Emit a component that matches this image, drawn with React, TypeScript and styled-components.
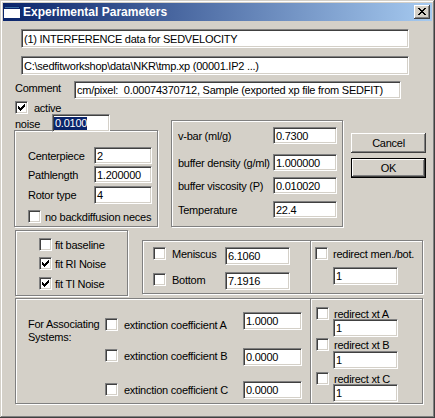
import React from 'react';
import styled, { createGlobalStyle } from 'styled-components';

const Global = createGlobalStyle`
  html, body { margin: 0; padding: 0; background: #D4D0C8; }
  body { font-family: "Liberation Sans", Arial, sans-serif; font-size: 11px; letter-spacing: -0.25px; color: #000; }
  * { box-sizing: border-box; }
`;

const Window = styled.div`
  width: 435px;
  height: 418px;
  padding: 3px;
  background: #D4D0C8;
  box-shadow: inset -1px -1px 0 #404040, inset 1px 1px 0 #D4D0C8, inset -2px -2px 0 #808080, inset 2px 2px 0 #fff;
  display: flex;
  flex-direction: column;
  overflow: hidden;
`;

const TitleBar = styled.div`
  height: 18px;
  display: flex;
  align-items: center;
  padding: 0 2px 0 1px;
  background: linear-gradient(to right, #0A246A, #A6CAF0);
  color: #fff;
  font-weight: bold;
  font-size: 12px;
  letter-spacing: 0;
`;

const TitleText = styled.span`
  margin-left: 3px;
  flex: 1;
  white-space: nowrap;
`;

const CloseBtn = styled.div`
  width: 16px;
  height: 14px;
  background: #D4D0C8;
  box-shadow: inset -1px -1px 0 #404040, inset 1px 1px 0 #fff, inset -2px -2px 0 #808080;
  display: flex;
  align-items: center;
  justify-content: center;
  padding-bottom: 1px;
`;

const Client = styled.div`
  display: flex;
  flex-direction: column;
  flex: 1;
`;

const Line = styled.div<{ $mt?: number; $ml?: number }>`
  display: flex;
  align-items: flex-start;
  margin-top: ${p => p.$mt ?? 0}px;
  margin-left: ${p => p.$ml ?? 0}px;
`;

const Edit = styled.div<{ $w: number; $h?: number; $mt?: number; $ml?: number }>`
  width: ${p => p.$w}px;
  height: ${p => p.$h ?? 18}px;
  margin-top: ${p => p.$mt ?? 0}px;
  margin-left: ${p => p.$ml ?? 0}px;
  flex-shrink: 0;
  background: #fff;
  border: 1px solid;
  border-color: #808080 #fff #fff #808080;
  box-shadow: inset 1px 1px 0 #404040, inset -1px -1px 0 #D4D0C8;
  padding: 0 2px;
  display: flex;
  align-items: center;
  white-space: nowrap;
  overflow: hidden;
  position: relative;
  z-index: 1;
`;

const Selected = styled.span`
  background: #0A246A;
  color: #fff;
  margin-left: -1px;
  padding-left: 1px;
  line-height: 13px;
`;

const Label = styled.span<{ $w?: number }>`
  width: ${p => (p.$w ? `${p.$w}px` : 'auto')};
  flex-shrink: 0;
  white-space: nowrap;
`;

const CommentLabel = styled(Label)`
  margin-top: 1px;
`;

const NoiseLabel = styled(Label)`
  margin-top: 4px;
`;

const Box = styled.span`
  width: 13px;
  height: 13px;
  flex-shrink: 0;
  background: #fff;
  border: 1px solid;
  border-color: #808080 #fff #fff #808080;
  box-shadow: inset 1px 1px 0 #404040, inset -1px -1px 0 #D4D0C8;
  display: flex;
  align-items: center;
  justify-content: center;
`;

const CheckRow = styled.div<{ $gap?: number; $w?: number; $mt?: number }>`
  display: flex;
  align-items: center;
  height: 13px;
  gap: ${p => p.$gap ?? 5}px;
  width: ${p => (p.$w ? `${p.$w}px` : 'auto')};
  margin-top: ${p => p.$mt ?? 0}px;
  flex-shrink: 0;
  white-space: nowrap;
`;

const Group = styled.div<{ $w: number; $h: number; $mt?: number; $ml?: number }>`
  width: ${p => p.$w}px;
  height: ${p => p.$h}px;
  margin-top: ${p => p.$mt ?? 0}px;
  margin-left: ${p => p.$ml ?? 0}px;
  flex-shrink: 0;
  border: 1px solid #808080;
  box-shadow: inset 1px 1px 0 #fff, 1px 1px 0 #fff;
  display: flex;
  flex-direction: column;
`;

const LeftCol = styled.div`
  width: 144px;
  display: flex;
  flex-direction: column;
  flex-shrink: 0;
`;

const NoiseRow = styled.div`
  height: 18px;
  padding-left: 1px;
  display: flex;
  align-items: flex-start;
`;

const CellGroup = styled(Group)`
  margin-top: -2px;
  padding: 16px 0 0 13px;
`;

const ParamRow = styled.div<{ $cols: string; $mt?: number }>`
  display: grid;
  grid-template-columns: ${p => p.$cols};
  align-items: center;
  height: 17px;
  margin-top: ${p => p.$mt ?? 0}px;
  white-space: nowrap;
`;

const VbarGroup = styled(Group)`
  padding: 6px 0 0 6px;
`;

const ButtonCol = styled.div`
  display: flex;
  flex-direction: column;
  gap: 5px;
  margin: 19px 0 0 8px;
`;

const Button = styled.div<{ $default?: boolean }>`
  width: 75px;
  height: 20px;
  display: flex;
  align-items: center;
  justify-content: center;
  background: #D4D0C8;
  box-shadow: inset -1px -1px 0 #404040, inset 1px 1px 0 #fff, inset -2px -2px 0 #808080;
  border: ${p => (p.$default ? '1px solid #000' : 'none')};
`;

const FitGroup = styled(Group)`
  padding: 7px 0 0 23px;
  gap: 6px;
`;

const MenGroup = styled(Group)`
  padding: 6px 0 0 10px;
  gap: 7px;
`;

const FieldRow = styled.div`
  display: flex;
  align-items: flex-start;
`;

const RedirGroup = styled(Group)`
  padding: 6px 0 0 4px;
`;

const ExtGroup = styled(Group)`
  padding: 13px 0 0 12px;
  flex-direction: row;
`;

const AssocLabel = styled.div`
  width: 77px;
  margin-top: 6px;
  line-height: 13px;
  flex-shrink: 0;
`;

const ExtRows = styled.div`
  display: flex;
  flex-direction: column;
`;

const ExtRow = styled.div<{ $mt?: number }>`
  display: flex;
  align-items: flex-start;
  margin-top: ${p => p.$mt ?? 0}px;
`;

const XtGroup = styled(Group)`
  padding: 8px 0 0 5px;
`;

const Check = () => (
  <svg width="7" height="7" viewBox="0 0 7 7" shapeRendering="crispEdges">
    <rect x="0" y="2" width="1" height="3" fill="#000" />
    <rect x="1" y="3" width="1" height="3" fill="#000" />
    <rect x="2" y="4" width="1" height="3" fill="#000" />
    <rect x="3" y="3" width="1" height="3" fill="#000" />
    <rect x="4" y="2" width="1" height="3" fill="#000" />
    <rect x="5" y="1" width="1" height="3" fill="#000" />
    <rect x="6" y="0" width="1" height="3" fill="#000" />
  </svg>
);

const CheckBox = ({ checked }: { checked?: boolean }) => <Box>{checked ? <Check /> : null}</Box>;

const AppIcon = () => (
  <svg width="16" height="12" viewBox="0 0 16 12" shapeRendering="crispEdges">
    <rect x="0" y="0" width="16" height="12" fill="#fff" />
    <rect x="0" y="0" width="16" height="3" fill="#0A246A" />
    <rect x="1" y="1" width="14" height="1" fill="#3A6EA5" />
  </svg>
);

const CloseGlyph = () => (
  <svg width="8" height="7" viewBox="0 0 8 7" shapeRendering="crispEdges">
    <path d="M0 0h2v1h-2zM6 0h2v1h-2zM1 1h2v1h-2zM5 1h2v1h-2zM2 2h4v1h-4zM3 3h2v1h-2zM2 4h4v1h-4zM1 5h2v1h-2zM5 5h2v1h-2zM0 6h2v1h-2zM6 6h2v1h-2z" fill="#000" />
  </svg>
);

export default function App() {
  return (
    <>
      <Global />
      <Window>
        <TitleBar>
          <AppIcon />
          <TitleText>Experimental Parameters</TitleText>
          <CloseBtn>
            <CloseGlyph />
          </CloseBtn>
        </TitleBar>
        <Client>
          <Line $mt={8} $ml={18}>
            <Edit $w={388} $h={19}>(1) INTERFERENCE data for SEDVELOCITY</Edit>
          </Line>
          <Line $mt={8} $ml={18}>
            <Edit $w={388} $h={19}>C:\sedfitworkshop\data\NKR\tmp.xp (00001.IP2 ...)</Edit>
          </Line>
          <Line $mt={6} $ml={12}>
            <CommentLabel $w={59}>Comment</CommentLabel>
            <Edit $w={327} $h={18}>cm/pixel:&nbsp; 0.00074370712, Sample (exported xp file from SEDFIT)</Edit>
          </Line>
          <Line $mt={2} $ml={12}>
            <CheckRow $gap={6}>
              <CheckBox checked />
              <span>active</span>
            </CheckRow>
          </Line>
          <Line $ml={11}>
            <LeftCol>
              <NoiseRow>
                <NoiseLabel $w={37}>noise</NoiseLabel>
                <Edit $w={58} $h={18}>
                  <Selected>0.0100</Selected>
                </Edit>
              </NoiseRow>
              <CellGroup $w={144} $h={97}>
                <ParamRow $cols="66px 58px">
                  <span>Centerpiece</span>
                  <Edit $w={58} $h={17}>2</Edit>
                </ParamRow>
                <ParamRow $cols="66px 58px" $mt={2}>
                  <span>Pathlength</span>
                  <Edit $w={58} $h={17}>1.200000</Edit>
                </ParamRow>
                <ParamRow $cols="66px 58px" $mt={3}>
                  <span>Rotor type</span>
                  <Edit $w={58} $h={18}>4</Edit>
                </ParamRow>
                <CheckRow $gap={4} $mt={7}>
                  <CheckBox />
                  <span>no backdiffusion neces</span>
                </CheckRow>
              </CellGroup>
            </LeftCol>
            <VbarGroup $w={172} $h={107} $mt={6} $ml={13}>
              <ParamRow $cols="95px 64px">
                <span>v-bar (ml/g)</span>
                <Edit $w={64} $h={17}>0.7300</Edit>
              </ParamRow>
              <ParamRow $cols="95px 64px" $mt={10}>
                <span>buffer density (g/ml)</span>
                <Edit $w={64} $h={17}>1.000000</Edit>
              </ParamRow>
              <ParamRow $cols="95px 64px" $mt={6}>
                <span>buffer viscosity (P)</span>
                <Edit $w={64} $h={17}>0.010020</Edit>
              </ParamRow>
              <ParamRow $cols="95px 64px" $mt={7}>
                <span>Temperature</span>
                <Edit $w={64} $h={17}>22.4</Edit>
              </ParamRow>
            </VbarGroup>
            <ButtonCol>
              <Button>Cancel</Button>
              <Button $default>OK</Button>
            </ButtonCol>
          </Line>
          <Line $ml={12}>
            <FitGroup $w={113} $h={66} $mt={3}>
              <CheckRow $gap={3}>
                <CheckBox />
                <span>fit baseline</span>
              </CheckRow>
              <CheckRow $gap={3}>
                <CheckBox checked />
                <span>fit RI Noise</span>
              </CheckRow>
              <CheckRow $gap={3} $mt={1}>
                <CheckBox checked />
                <span>fit TI Noise</span>
              </CheckRow>
            </FitGroup>
            <MenGroup $w={169} $h={54} $mt={13} $ml={14}>
              <FieldRow>
                <CheckRow $gap={6} $w={72}>
                  <CheckBox />
                  <span>Meniscus</span>
                </CheckRow>
                <Edit $w={65} $h={18}>6.1060</Edit>
              </FieldRow>
              <FieldRow>
                <CheckRow $gap={6} $w={72} $mt={1}>
                  <CheckBox />
                  <span>Bottom</span>
                </CheckRow>
                <Edit $w={65} $h={18}>7.1916</Edit>
              </FieldRow>
            </MenGroup>
            <RedirGroup $w={113} $h={54} $mt={13} $ml={-1}>
              <CheckRow $gap={5}>
                <CheckBox />
                <span>redirect men./bot.</span>
              </CheckRow>
              <Edit $w={65} $h={18} $mt={7} $ml={18}>1</Edit>
            </RedirGroup>
          </Line>
          <Line $mt={2} $ml={12}>
            <ExtGroup $w={296} $h={106}>
              <AssocLabel>
                For Associating
                <br />
                Systems:
              </AssocLabel>
              <ExtRows>
                <ExtRow>
                  <CheckRow $gap={6} $w={138} $mt={6}>
                    <CheckBox />
                    <span>extinction coefficient A</span>
                  </CheckRow>
                  <Edit $w={59} $h={18}>1.0000</Edit>
                </ExtRow>
                <ExtRow $mt={17}>
                  <CheckRow $gap={6} $w={138} $mt={1}>
                    <CheckBox />
                    <span>extinction coefficient B</span>
                  </CheckRow>
                  <Edit $w={59} $h={18}>0.0000</Edit>
                </ExtRow>
                <ExtRow $mt={15}>
                  <CheckRow $gap={6} $w={138} $mt={2}>
                    <CheckBox />
                    <span>extinction coefficient C</span>
                  </CheckRow>
                  <Edit $w={59} $h={18}>0.0000</Edit>
                </ExtRow>
              </ExtRows>
            </ExtGroup>
            <XtGroup $w={113} $h={106} $ml={-1}>
              <CheckRow $gap={5}>
                <CheckBox />
                <span>redirect xt A</span>
              </CheckRow>
              <Edit $w={65} $h={18} $mt={-1} $ml={17}>1</Edit>
              <CheckRow $gap={5} $mt={1}>
                <CheckBox />
                <span>redirect xt B</span>
              </CheckRow>
              <Edit $w={65} $h={18} $ml={17}>1</Edit>
              <CheckRow $gap={5} $mt={3}>
                <CheckBox />
                <span>redirect xt C</span>
              </CheckRow>
              <Edit $w={65} $h={18} $mt={-1} $ml={17}>1</Edit>
            </XtGroup>
          </Line>
        </Client>
      </Window>
    </>
  );
}
